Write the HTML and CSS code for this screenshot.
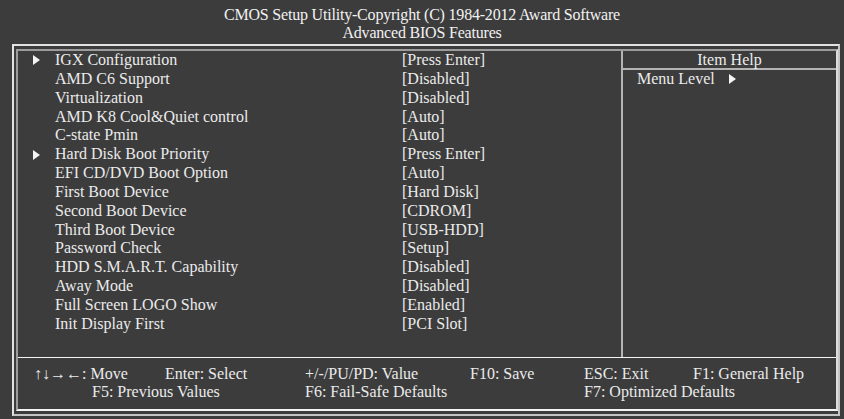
FILE: index.html
```html
<!DOCTYPE html>
<html>
<head>
<meta charset="utf-8">
<title>Advanced BIOS Features</title>
<link rel="stylesheet" href="styles.css">
</head>
<body>
<div class="screen">
  <header class="title">
    <div>CMOS Setup Utility-Copyright (C) 1984-2012 Award Software</div>
    <div>Advanced BIOS Features</div>
  </header>
  <div class="frame-outer">
    <div class="frame-inner">
      <div class="main">
        <div class="items">
          <div class="row"><span class="mark"><i class="tri"></i></span><span class="label">IGX Configuration</span><span class="value">[Press Enter]</span></div>
          <div class="row"><span class="mark"></span><span class="label">AMD C6 Support</span><span class="value">[Disabled]</span></div>
          <div class="row"><span class="mark"></span><span class="label">Virtualization</span><span class="value">[Disabled]</span></div>
          <div class="row"><span class="mark"></span><span class="label">AMD K8 Cool&amp;Quiet control</span><span class="value">[Auto]</span></div>
          <div class="row"><span class="mark"></span><span class="label">C-state Pmin</span><span class="value">[Auto]</span></div>
          <div class="row"><span class="mark"><i class="tri"></i></span><span class="label">Hard Disk Boot Priority</span><span class="value">[Press Enter]</span></div>
          <div class="row"><span class="mark"></span><span class="label">EFI CD/DVD Boot Option</span><span class="value">[Auto]</span></div>
          <div class="row"><span class="mark"></span><span class="label">First Boot Device</span><span class="value">[Hard Disk]</span></div>
          <div class="row"><span class="mark"></span><span class="label">Second Boot Device</span><span class="value">[CDROM]</span></div>
          <div class="row"><span class="mark"></span><span class="label">Third Boot Device</span><span class="value">[USB-HDD]</span></div>
          <div class="row"><span class="mark"></span><span class="label">Password Check</span><span class="value">[Setup]</span></div>
          <div class="row"><span class="mark"></span><span class="label">HDD S.M.A.R.T. Capability</span><span class="value">[Disabled]</span></div>
          <div class="row"><span class="mark"></span><span class="label">Away Mode</span><span class="value">[Disabled]</span></div>
          <div class="row"><span class="mark"></span><span class="label">Full Screen LOGO Show</span><span class="value">[Enabled]</span></div>
          <div class="row"><span class="mark"></span><span class="label">Init Display First</span><span class="value">[PCI Slot]</span></div>
        </div>
        <aside class="help">
          <div class="help-head">Item Help</div>
          <div class="help-body">Menu Level<i class="tri help-tri"></i></div>
        </aside>
      </div>
      <footer class="keys">
        <div class="keyrow r1">
          <span class="k1">↑↓→←: Move</span>
          <span class="k2">Enter: Select</span>
          <span class="k3">+/-/PU/PD: Value</span>
          <span class="k4">F10: Save</span>
          <span class="k5">ESC: Exit</span>
          <span class="k6">F1: General Help</span>
        </div>
        <div class="keyrow r2">
          <span class="k7">F5: Previous Values</span>
          <span class="k8">F6: Fail-Safe Defaults</span>
          <span class="k9">F7: Optimized Defaults</span>
        </div>
      </footer>
    </div>
  </div>
</div>
</body>
</html>
```

FILE: styles.css
```css
html, body {
  margin: 0;
  padding: 0;
  background: #3c3c3c;
}
body {
  width: 844px;
  height: 419px;
  overflow: hidden;
  font-family: "Liberation Serif", "Times New Roman", serif;
  font-size: 16px;
  color: #ebebeb;
}
.screen {
  width: 844px;
  height: 419px;
}
.title {
  padding-top: 6px;
  text-align: center;
  line-height: 18px;
  color: #f2f2f2;
  height: 38px;
  letter-spacing: -0.2px;
}
.frame-outer {
  margin-left: 12px;
  width: 828px;
  height: 372px;
  box-sizing: border-box;
  border-style: solid;
  border-width: 2px;
  border-color: #e2e2e2 #c4c4c4 #c4c4c4 #e2e2e2;
  padding: 3px 0 3px 2px;
}
.frame-inner {
  height: 100%;
  box-sizing: border-box;
  border-style: solid;
  border-width: 2px;
  border-color: #9c9c9c #dcdcdc #f4f4f4 #9c9c9c;
  display: flex;
  flex-direction: column;
}
.main {
  height: 306px;
  display: flex;
  border-bottom: 1px solid #f4f4f4;
}
.items {
  width: 603px;
  line-height: 18.85px;
}
.row {
  display: flex;
  height: 18.85px;
  white-space: nowrap;
}
.mark {
  width: 37px;
  flex: none;
  display: flex;
  align-items: center;
  padding-left: 15px;
  box-sizing: border-box;
}
.label {
  width: 347px;
  flex: none;
}
.tri {
  display: inline-block;
  width: 0;
  height: 0;
  border-left: 7px solid #f4f4f4;
  border-top: 5px solid transparent;
  border-bottom: 5px solid transparent;
}
.help {
  flex: 1;
  border-left: 2px solid #b4b4b4;
}
.help-head {
  height: 17px;
  line-height: 18px;
  text-align: center;
  border-bottom: 2px solid #b4b4b4;
}
.help-body {
  padding-left: 14px;
  line-height: 18px;
  display: flex;
  align-items: center;
}
.help-tri {
  margin-left: 14px;
}
.keys {
  flex: 1;
  padding-top: 7px;
  line-height: 17.6px;
  white-space: nowrap;
}
.keyrow {
  display: flex;
}
.r1 {
  padding-left: 16px;
}
.r2 {
  padding-left: 74px;
}
.k1 { width: 131px; }
.k2 { width: 140px; }
.k3 { width: 165px; }
.k4 { width: 114px; }
.k5 { width: 109px; }
.k7 { width: 213px; }
.k8 { width: 279px; }
```
